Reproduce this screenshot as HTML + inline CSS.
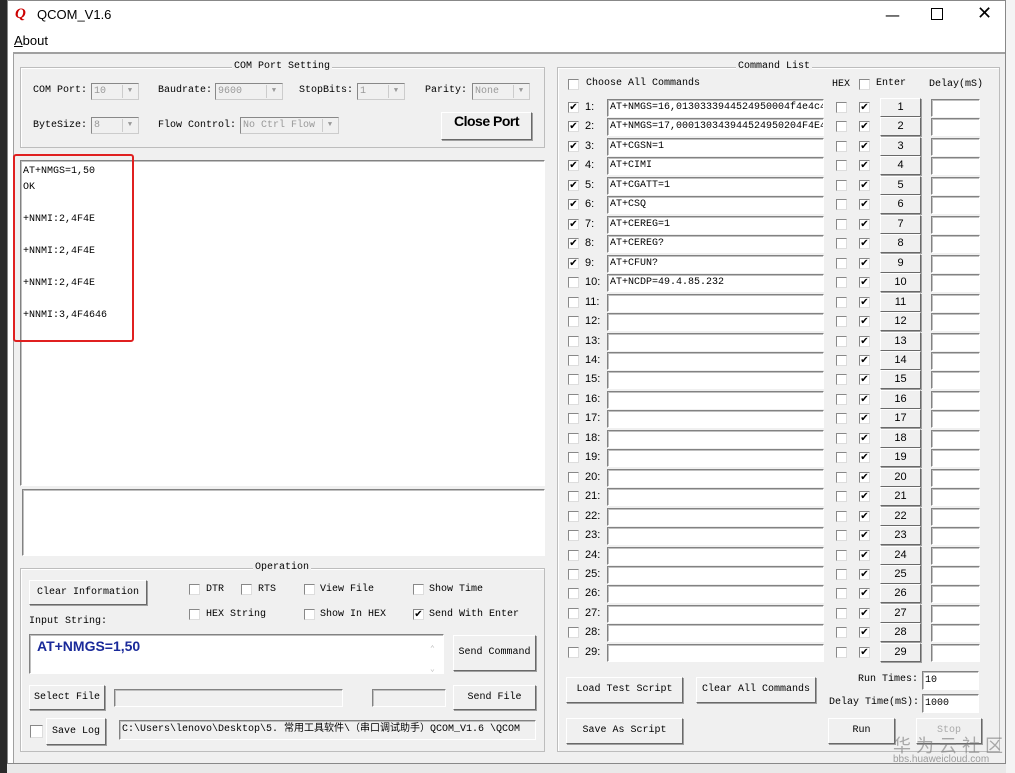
<!DOCTYPE html><html><head><meta charset="utf-8"><style>
*{box-sizing:border-box;margin:0;padding:0;white-space:nowrap}
body{width:1015px;height:773px;overflow:hidden;background:#e9e9e9;position:relative;font-family:"Liberation Mono","Noto Sans CJK SC",monospace;font-size:10px;color:#000}
.a{position:absolute}
.win{left:7px;top:0;width:999px;height:764px;background:#fff;border:1px solid #888}
.client{left:13px;top:52px;width:992px;height:711px;background:#f0f0f0;border-top:2px solid #a0a0a0;border-left:1px solid #a0a0a0}
.grp{border:1px solid #bdbdbd;box-shadow:inset 1px 1px 0 #fff}
.gt{background:#f0f0f0;padding:0 2px;font-size:10px}
.btn{background:#f0f0f0;border:1px solid;border-color:#fff #696969 #696969 #fff;box-shadow:1px 1px 0 #a0a0a0;text-align:center;font-size:10px}
.tb{background:#fff;border:1px solid;border-color:#828282 #fff #fff #828282;box-shadow:inset 1px 1px 0 #c0c0c0;font-size:10px;padding-left:2px;overflow:hidden}
.cb{width:11px;height:11px;background:#fff;border:1px solid;border-color:#888 #ddd #ddd #888;font-size:10px;line-height:9px;text-align:center;font-family:"DejaVu Sans",sans-serif}
.dd{background:#f0f0f0;border:1px solid;border-color:#888 #ccc #ccc #888;color:#999;font-size:10px;padding-left:2px;line-height:15px}
.dd i{position:absolute;right:1px;top:1px;width:15px;height:13px;border-left:1px solid #ccc;font-style:normal;font-size:7px;text-align:center;line-height:13px;color:#999}
.r{position:absolute;left:0;width:440px;height:19px}
.r .cb{position:absolute;top:4px}
.r .n{position:absolute;left:28px;top:3px;font-family:"Liberation Sans",sans-serif;font-size:11px}
.r .tb{position:absolute;left:50px;top:1px;width:217px;height:18px;line-height:16px}
.r .b{position:absolute;left:323px;top:0;width:41px;height:19px;line-height:17px;font-family:"Liberation Sans",sans-serif;font-size:11px}
.r .d{position:absolute;left:374px;top:1px;width:49px;height:18px}
</style></head><body>
<div class="a" style="left:0;top:0;width:7px;height:773px;background:#2a2a2a"></div>
<div class="a" style="left:1006px;top:0;width:9px;height:773px;background:#f4f4f4"></div>
<div class="a win"></div>
<div class="a" style="left:15px;top:6px;width:18px;height:16px;color:#c00;font:bold italic 15px 'Liberation Serif',serif">Q</div>
<div class="a" style="left:37px;top:7px;font:13px 'Liberation Sans',sans-serif">QCOM_V1.6</div>
<div class="a" style="left:885px;top:6px;font:15px 'DejaVu Sans',sans-serif">—</div>
<div class="a" style="left:931px;top:8px;width:12px;height:12px;border:1px solid #000"></div>
<div class="a" style="left:977px;top:3px;font:18px 'DejaVu Sans',sans-serif">✕</div>
<div class="a" style="left:14px;top:33px;font:13px 'Liberation Sans',sans-serif"><u>A</u>bout</div>
<div class="a client"></div>

<div class="a grp" style="left:20px;top:67px;width:525px;height:81px"></div>
<div class="a gt" style="left:232px;top:61px">COM Port Setting</div>
<div class="a" style="left:33px;top:85px">COM Port:</div>
<div class="a dd" style="left:91px;top:83px;width:48px;height:17px">10<i>▼</i></div>
<div class="a" style="left:158px;top:85px">Baudrate:</div>
<div class="a dd" style="left:215px;top:83px;width:68px;height:17px">9600<i>▼</i></div>
<div class="a" style="left:299px;top:85px">StopBits:</div>
<div class="a dd" style="left:357px;top:83px;width:48px;height:17px">1<i>▼</i></div>
<div class="a" style="left:425px;top:85px">Parity:</div>
<div class="a dd" style="left:472px;top:83px;width:58px;height:17px">None<i>▼</i></div>
<div class="a" style="left:33px;top:120px">ByteSize:</div>
<div class="a dd" style="left:91px;top:117px;width:48px;height:17px">8<i>▼</i></div>
<div class="a" style="left:158px;top:120px">Flow Control:</div>
<div class="a dd" style="left:240px;top:117px;width:99px;height:17px">No Ctrl Flow<i>▼</i></div>
<div class="a btn" style="left:441px;top:112px;width:91px;height:28px;line-height:26px;font:bold 14px 'Liberation Sans',sans-serif;letter-spacing:-0.5px">Close Port</div>

<div class="a tb" style="left:20px;top:160px;width:525px;height:326px"></div>
<div class="a" style="left:23px;top:164px;font-size:10px;line-height:16px;white-space:pre">AT+NMGS=1,50
OK

+NNMI:2,4F4E

+NNMI:2,4F4E

+NNMI:2,4F4E

+NNMI:3,4F4646</div>
<div class="a" style="left:13px;top:154px;width:121px;height:188px;border:2px solid #e02020;border-radius:3px"></div>
<div class="a tb" style="left:22px;top:489px;width:523px;height:67px"></div>

<div class="a grp" style="left:20px;top:568px;width:525px;height:184px"></div>
<div class="a gt" style="left:253px;top:562px">Operation</div>
<div class="a btn" style="left:29px;top:580px;width:118px;height:25px;line-height:23px">Clear Information</div>
<div class="a cb" style="left:189px;top:584px"></div><div class="a" style="left:206px;top:584px">DTR</div>
<div class="a cb" style="left:241px;top:584px"></div><div class="a" style="left:258px;top:584px">RTS</div>
<div class="a cb" style="left:304px;top:584px"></div><div class="a" style="left:320px;top:584px">View File</div>
<div class="a cb" style="left:413px;top:584px"></div><div class="a" style="left:429px;top:584px">Show Time</div>
<div class="a cb" style="left:189px;top:609px"></div><div class="a" style="left:206px;top:609px">HEX String</div>
<div class="a cb" style="left:304px;top:609px"></div><div class="a" style="left:320px;top:609px">Show In HEX</div>
<div class="a cb" style="left:413px;top:609px">✔</div><div class="a" style="left:429px;top:609px">Send With Enter</div>
<div class="a" style="left:29px;top:616px">Input String:</div>
<div class="a tb" style="left:29px;top:634px;width:415px;height:40px"></div>
<div class="a" style="left:37px;top:638px;font:bold 14px 'Liberation Sans',sans-serif;color:#1a2a9a">AT+NMGS=1,50</div>
<div class="a" style="left:430px;top:640px;color:#bbb;font-size:8px;line-height:20px;white-space:pre">⌃
⌄</div>
<div class="a btn" style="left:453px;top:635px;width:83px;height:36px;line-height:34px">Send Command</div>
<div class="a btn" style="left:29px;top:685px;width:76px;height:25px;line-height:23px">Select File</div>
<div class="a tb" style="left:114px;top:689px;width:229px;height:18px;background:#f0f0f0"></div>
<div class="a tb" style="left:372px;top:689px;width:74px;height:18px;background:#f0f0f0"></div>
<div class="a btn" style="left:453px;top:685px;width:83px;height:25px;line-height:23px">Send File</div>
<div class="a cb" style="left:30px;top:725px;width:13px;height:13px"></div>
<div class="a btn" style="left:46px;top:718px;width:60px;height:27px;line-height:25px">Save Log</div>
<div class="a tb" style="left:119px;top:720px;width:417px;height:20px;line-height:18px;font-size:10px;background:#f0f0f0">C:\Users\lenovo\Desktop\5. 常用工具软件\（串口调试助手）QCOM_V1.6 \QCOM</div>

<div class="a grp" style="left:557px;top:67px;width:443px;height:685px"></div>
<div class="a gt" style="left:736px;top:61px">Command List</div>
<div class="a cb" style="left:568px;top:79px"></div><div class="a" style="left:586px;top:78px">Choose All Commands</div>
<div class="a" style="left:832px;top:79px">HEX</div>
<div class="a cb" style="left:859px;top:79px"></div><div class="a" style="left:876px;top:78px">Enter</div>
<div class="a" style="left:929px;top:79px">Delay(mS)</div>

<div class="a" style="left:557px;top:0;width:440px;height:700px">
<div class="r" style="top:98px"><div class="cb" style="left:11px">✔</div><div class="n">1:</div><div class="tb">AT+NMGS=16,0130333944524950004f4e4c4c</div><div class="cb" style="left:279px"></div><div class="cb" style="left:302px">✔</div><div class="btn b">1</div><div class="tb d"></div></div>
<div class="r" style="top:117px"><div class="cb" style="left:11px">✔</div><div class="n">2:</div><div class="tb">AT+NMGS=17,000130343944524950204F4E4C</div><div class="cb" style="left:279px"></div><div class="cb" style="left:302px">✔</div><div class="btn b">2</div><div class="tb d"></div></div>
<div class="r" style="top:137px"><div class="cb" style="left:11px">✔</div><div class="n">3:</div><div class="tb">AT+CGSN=1</div><div class="cb" style="left:279px"></div><div class="cb" style="left:302px">✔</div><div class="btn b">3</div><div class="tb d"></div></div>
<div class="r" style="top:156px"><div class="cb" style="left:11px">✔</div><div class="n">4:</div><div class="tb">AT+CIMI</div><div class="cb" style="left:279px"></div><div class="cb" style="left:302px">✔</div><div class="btn b">4</div><div class="tb d"></div></div>
<div class="r" style="top:176px"><div class="cb" style="left:11px">✔</div><div class="n">5:</div><div class="tb">AT+CGATT=1</div><div class="cb" style="left:279px"></div><div class="cb" style="left:302px">✔</div><div class="btn b">5</div><div class="tb d"></div></div>
<div class="r" style="top:195px"><div class="cb" style="left:11px">✔</div><div class="n">6:</div><div class="tb">AT+CSQ</div><div class="cb" style="left:279px"></div><div class="cb" style="left:302px">✔</div><div class="btn b">6</div><div class="tb d"></div></div>
<div class="r" style="top:215px"><div class="cb" style="left:11px">✔</div><div class="n">7:</div><div class="tb">AT+CEREG=1</div><div class="cb" style="left:279px"></div><div class="cb" style="left:302px">✔</div><div class="btn b">7</div><div class="tb d"></div></div>
<div class="r" style="top:234px"><div class="cb" style="left:11px">✔</div><div class="n">8:</div><div class="tb">AT+CEREG?</div><div class="cb" style="left:279px"></div><div class="cb" style="left:302px">✔</div><div class="btn b">8</div><div class="tb d"></div></div>
<div class="r" style="top:254px"><div class="cb" style="left:11px">✔</div><div class="n">9:</div><div class="tb">AT+CFUN?</div><div class="cb" style="left:279px"></div><div class="cb" style="left:302px">✔</div><div class="btn b">9</div><div class="tb d"></div></div>
<div class="r" style="top:273px"><div class="cb" style="left:11px"></div><div class="n">10:</div><div class="tb">AT+NCDP=49.4.85.232</div><div class="cb" style="left:279px"></div><div class="cb" style="left:302px">✔</div><div class="btn b">10</div><div class="tb d"></div></div>
<div class="r" style="top:293px"><div class="cb" style="left:11px"></div><div class="n">11:</div><div class="tb"></div><div class="cb" style="left:279px"></div><div class="cb" style="left:302px">✔</div><div class="btn b">11</div><div class="tb d"></div></div>
<div class="r" style="top:312px"><div class="cb" style="left:11px"></div><div class="n">12:</div><div class="tb"></div><div class="cb" style="left:279px"></div><div class="cb" style="left:302px">✔</div><div class="btn b">12</div><div class="tb d"></div></div>
<div class="r" style="top:332px"><div class="cb" style="left:11px"></div><div class="n">13:</div><div class="tb"></div><div class="cb" style="left:279px"></div><div class="cb" style="left:302px">✔</div><div class="btn b">13</div><div class="tb d"></div></div>
<div class="r" style="top:351px"><div class="cb" style="left:11px"></div><div class="n">14:</div><div class="tb"></div><div class="cb" style="left:279px"></div><div class="cb" style="left:302px">✔</div><div class="btn b">14</div><div class="tb d"></div></div>
<div class="r" style="top:370px"><div class="cb" style="left:11px"></div><div class="n">15:</div><div class="tb"></div><div class="cb" style="left:279px"></div><div class="cb" style="left:302px">✔</div><div class="btn b">15</div><div class="tb d"></div></div>
<div class="r" style="top:390px"><div class="cb" style="left:11px"></div><div class="n">16:</div><div class="tb"></div><div class="cb" style="left:279px"></div><div class="cb" style="left:302px">✔</div><div class="btn b">16</div><div class="tb d"></div></div>
<div class="r" style="top:409px"><div class="cb" style="left:11px"></div><div class="n">17:</div><div class="tb"></div><div class="cb" style="left:279px"></div><div class="cb" style="left:302px">✔</div><div class="btn b">17</div><div class="tb d"></div></div>
<div class="r" style="top:429px"><div class="cb" style="left:11px"></div><div class="n">18:</div><div class="tb"></div><div class="cb" style="left:279px"></div><div class="cb" style="left:302px">✔</div><div class="btn b">18</div><div class="tb d"></div></div>
<div class="r" style="top:448px"><div class="cb" style="left:11px"></div><div class="n">19:</div><div class="tb"></div><div class="cb" style="left:279px"></div><div class="cb" style="left:302px">✔</div><div class="btn b">19</div><div class="tb d"></div></div>
<div class="r" style="top:468px"><div class="cb" style="left:11px"></div><div class="n">20:</div><div class="tb"></div><div class="cb" style="left:279px"></div><div class="cb" style="left:302px">✔</div><div class="btn b">20</div><div class="tb d"></div></div>
<div class="r" style="top:487px"><div class="cb" style="left:11px"></div><div class="n">21:</div><div class="tb"></div><div class="cb" style="left:279px"></div><div class="cb" style="left:302px">✔</div><div class="btn b">21</div><div class="tb d"></div></div>
<div class="r" style="top:507px"><div class="cb" style="left:11px"></div><div class="n">22:</div><div class="tb"></div><div class="cb" style="left:279px"></div><div class="cb" style="left:302px">✔</div><div class="btn b">22</div><div class="tb d"></div></div>
<div class="r" style="top:526px"><div class="cb" style="left:11px"></div><div class="n">23:</div><div class="tb"></div><div class="cb" style="left:279px"></div><div class="cb" style="left:302px">✔</div><div class="btn b">23</div><div class="tb d"></div></div>
<div class="r" style="top:546px"><div class="cb" style="left:11px"></div><div class="n">24:</div><div class="tb"></div><div class="cb" style="left:279px"></div><div class="cb" style="left:302px">✔</div><div class="btn b">24</div><div class="tb d"></div></div>
<div class="r" style="top:565px"><div class="cb" style="left:11px"></div><div class="n">25:</div><div class="tb"></div><div class="cb" style="left:279px"></div><div class="cb" style="left:302px">✔</div><div class="btn b">25</div><div class="tb d"></div></div>
<div class="r" style="top:584px"><div class="cb" style="left:11px"></div><div class="n">26:</div><div class="tb"></div><div class="cb" style="left:279px"></div><div class="cb" style="left:302px">✔</div><div class="btn b">26</div><div class="tb d"></div></div>
<div class="r" style="top:604px"><div class="cb" style="left:11px"></div><div class="n">27:</div><div class="tb"></div><div class="cb" style="left:279px"></div><div class="cb" style="left:302px">✔</div><div class="btn b">27</div><div class="tb d"></div></div>
<div class="r" style="top:623px"><div class="cb" style="left:11px"></div><div class="n">28:</div><div class="tb"></div><div class="cb" style="left:279px"></div><div class="cb" style="left:302px">✔</div><div class="btn b">28</div><div class="tb d"></div></div>
<div class="r" style="top:643px"><div class="cb" style="left:11px"></div><div class="n">29:</div><div class="tb"></div><div class="cb" style="left:279px"></div><div class="cb" style="left:302px">✔</div><div class="btn b">29</div><div class="tb d"></div></div>
</div>

<div class="a btn" style="left:566px;top:677px;width:117px;height:26px;line-height:24px">Load Test Script</div>
<div class="a btn" style="left:696px;top:677px;width:120px;height:26px;line-height:24px">Clear All Commands</div>
<div class="a" style="left:858px;top:674px">Run Times:</div>
<div class="a tb" style="left:922px;top:671px;width:57px;height:19px;line-height:17px">10</div>
<div class="a" style="left:829px;top:697px">Delay Time(mS):</div>
<div class="a tb" style="left:922px;top:694px;width:57px;height:19px;line-height:17px">1000</div>
<div class="a btn" style="left:566px;top:718px;width:117px;height:26px;line-height:24px">Save As Script</div>
<div class="a btn" style="left:828px;top:718px;width:67px;height:26px;line-height:24px">Run</div>
<div class="a btn" style="left:916px;top:718px;width:66px;height:26px;line-height:24px;color:#aaa">Stop</div>
<div class="a" style="left:893px;top:732px;font:18px 'Noto Sans CJK SC',sans-serif;color:rgba(120,120,120,.6);letter-spacing:5px">华为云社区</div>
<div class="a" style="left:893px;top:754px;font:10px 'Liberation Sans',sans-serif;color:rgba(120,120,120,.7)">bbs.huaweicloud.com</div>
</body></html>
